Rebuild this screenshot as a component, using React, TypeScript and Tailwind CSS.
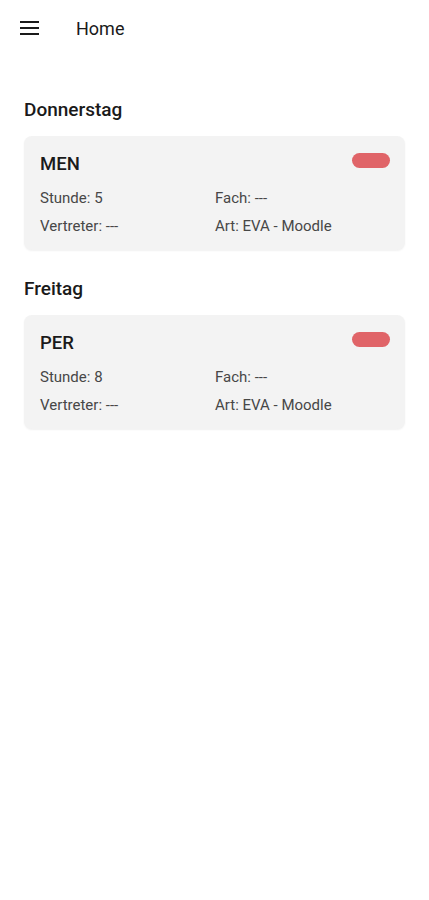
import React from "react";

interface Entry {
  subject: string;
  hour: number;
  teacher: string;
  type: string;
  course: string;
}

const days: { day: string; entries: Entry[] }[] = [
  { day: "Donnerstag", entries: [{ subject: "MEN", hour: 5, teacher: "---", type: "EVA - Moodle", course: "---" }] },
  { day: "Freitag", entries: [{ subject: "PER", hour: 8, teacher: "---", type: "EVA - Moodle", course: "---" }] },
];

const EntryCard: React.FC<{ entry: Entry }> = ({ entry }) => (
  <div className="rounded-lg bg-[#f3f3f3] shadow-[0_1px_2px_rgba(0,0,0,0.06)] pl-4 pr-[15px] pt-[17px] pb-[16px]">
    <div className="flex items-start justify-between">
      <span className="text-[18.5px] leading-[22px] font-medium text-[#1a1a1a]">{entry.subject}</span>
      <span className="mt-[0px] h-[15px] w-[38px] rounded-full bg-[#e06468]" />
    </div>
    <div className="mt-[16px] grid grid-cols-2 gap-y-[13px] text-[15px] leading-[15px] text-[#474747]">
      <span>Stunde: {entry.hour}</span>
      <span>Fach: {entry.course}</span>
      <span>Vertreter: {entry.teacher}</span>
      <span>Art: {entry.type}</span>
    </div>
  </div>
);

export default function App() {
  return (
    <div className="min-h-[900px] w-full bg-white" style={{ fontFamily: "Roboto, 'Noto Sans', sans-serif" }}>
      {/* top bar */}
      <header className="flex h-[56px] items-center pl-[20px]">
        <svg width="19" height="14" viewBox="0 0 19 14" className="text-[#1a1a1a]">
          <rect x="0" y="0" width="19" height="2" fill="currentColor" />
          <rect x="0" y="6" width="19" height="2" fill="currentColor" />
          <rect x="0" y="12" width="19" height="2" fill="currentColor" />
        </svg>
        <span className="ml-[37px] text-[18px] font-normal text-[#1a1a1a]">Home</span>
      </header>

      <main className="px-6 pt-[42px]">
        {days.map((d, i) => (
          <section key={d.day} className={i > 0 ? "mt-[27px]" : ""}>
            <h2 className="text-[19px] leading-[24px] font-medium text-[#1a1a1a]">{d.day}</h2>
            <div className="mt-[14px] flex flex-col gap-4">
              {d.entries.map((e) => (
                <EntryCard key={e.subject} entry={e} />
              ))}
            </div>
          </section>
        ))}
      </main>
    </div>
  );
}
